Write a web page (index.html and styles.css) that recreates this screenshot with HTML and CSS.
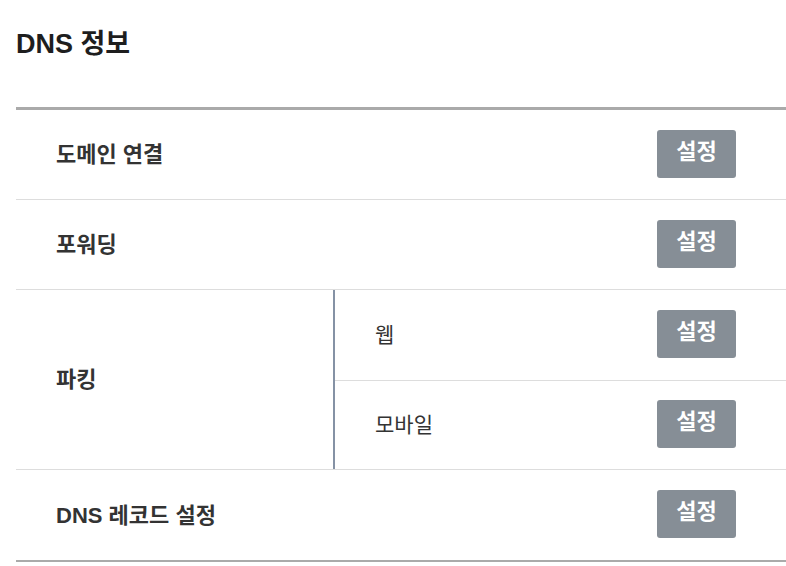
FILE: index.html
```html
<!DOCTYPE html>
<html lang="ko">
<head>
<meta charset="utf-8">
<title>DNS 정보</title>
<link rel="stylesheet" href="styles.css">
</head>
<body>
<section class="panel">
  <h2 class="title">DNS 정보</h2>
  <div class="table">
    <div class="row">
      <div class="label">도메인 연결</div>
      <button class="btn">설정</button>
    </div>
    <div class="row">
      <div class="label">포워딩</div>
      <button class="btn">설정</button>
    </div>
    <div class="group">
      <div class="group-label">파킹</div>
      <div class="group-items">
        <div class="sub-row">
          <div class="sub-label">웹</div>
          <button class="btn">설정</button>
        </div>
        <div class="sub-row">
          <div class="sub-label">모바일</div>
          <button class="btn">설정</button>
        </div>
      </div>
    </div>
    <div class="row">
      <div class="label">DNS 레코드 설정</div>
      <button class="btn">설정</button>
    </div>
  </div>
</section>
</body>
</html>
```

FILE: styles.css
```css
* { box-sizing: border-box; }
html, body { margin: 0; padding: 0; background: #fff; }
body {
  font-family: "Liberation Sans", "Noto Sans CJK KR", sans-serif;
  color: #222;
}
.panel { padding-left: 16px; }
.title {
  margin: 0;
  padding-top: 26px;
  height: 107px;
  font-size: 27px;
  font-weight: 700;
  line-height: 36px;
  color: #1e1e1e;
}
.table {
  border-top: 3px solid #aaaaaa;
  border-bottom: 2px solid #aaaaaa;
}
.row, .group { border-bottom: 1px solid #dddddd; }
.row:last-child { border-bottom: none; }
.row {
  height: 90px;
  display: flex;
  align-items: center;
  justify-content: space-between;
  padding: 0 50px 0 40px;
}
.label, .group-label {
  font-size: 22px;
  font-weight: 700;
  color: #333;
  margin-top: -5px;
}
.group { display: flex; height: 180px; }
.group-label {
  width: 319px;
  padding-left: 40px;
  margin-top: 0;
  padding-bottom: 5px;
  display: flex;
  align-items: center;
  border-right: 2px solid #8592a5;
}
.group-items { flex: 1; display: flex; flex-direction: column; }
.sub-row {
  height: 90px;
  display: flex;
  align-items: center;
  justify-content: space-between;
  padding: 0 50px 0 40px;
}
.sub-row + .sub-row { border-top: 1px solid #dddddd; height: 89px; }
.sub-label { font-size: 21px; color: #333; margin-top: -5px; }
.btn {
  width: 79px;
  height: 48px;
  border: none;
  border-radius: 3px;
  background: #868e96;
  color: #fff;
  font-family: inherit;
  font-size: 22px;
  font-weight: 700;
  line-height: 44px;
  padding: 0 0 4px;
  margin-top: -2px;
}
```
